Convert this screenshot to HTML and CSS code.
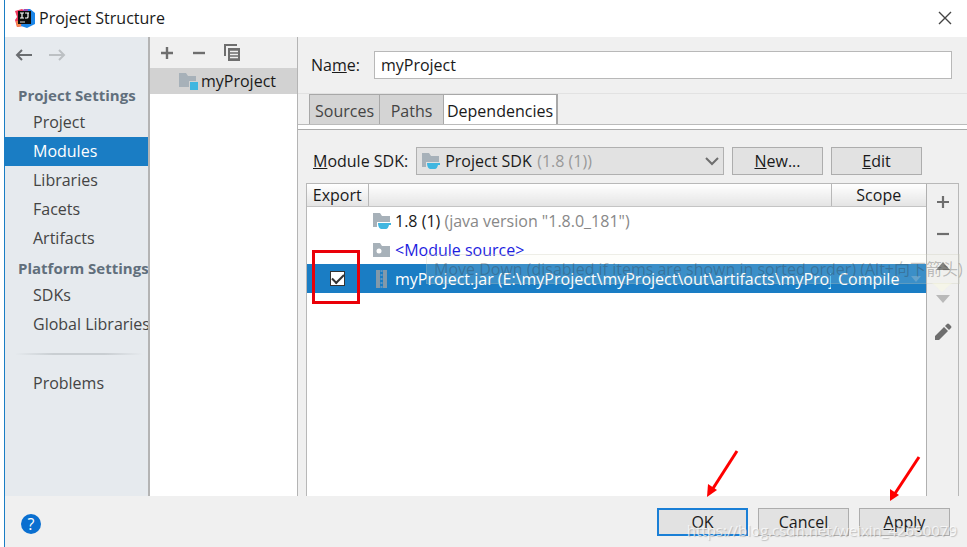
FILE: index.html
```
<!DOCTYPE html>
<html lang="en">
<head>
    <meta charset="UTF-8">
    <title>Project Structure</title>
    <link rel="stylesheet" href="styles.css">
</head>
<body>
    <div class="dialog">
        <header class="title-bar">
            <svg class="logo" width="20" height="20" viewBox="0 0 20 20">
                <path d="M0 3l7-2 5 3-4 14-6 1-2-7 2-3z" fill="#f0385f"/>
                <path d="M1 13l4 0 2 5-5 1z" fill="#f58a4b"/>
                <path d="M9 1l6 0 5 4 0 11-8 4-6-2z" fill="#1c86e8"/>
                <path d="M9 1l4 0 0 3-6 0z" fill="#a04bb5"/>
                <rect x="3" y="3" width="13" height="13" fill="#0b0b0b"/>
                <path d="M5 5h4M7 5v5M5 10h4M10 5h4M13 5v4q0 1-1 1h-2" fill="none" stroke="#fff" stroke-width="1.2"/>
                <path d="M5 14h5" stroke="#ddd" stroke-width="1"/>
            </svg>
            <h1>Project Structure</h1>
            <button class="icon-button close" aria-label="Close">
                <svg width="14" height="14" viewBox="0 0 14 14"><path d="M1 1l12 12M13 1L1 13" stroke="#444" stroke-width="1.4"/></svg>
            </button>
        </header>

        <div class="content">
            <nav class="sidebar">
                <div class="history">
                    <button class="icon-button" aria-label="Back">
                        <svg width="18" height="14" viewBox="0 0 18 14"><path d="M17 7H2M7 2L2 7l5 5" fill="none" stroke="#6a6d70" stroke-width="2"/></svg>
                    </button>
                    <button class="icon-button" aria-label="Forward" disabled>
                        <svg width="18" height="14" viewBox="0 0 18 14"><path d="M1 7h15M11 2l5 5-5 5" fill="none" stroke="#bcc0c3" stroke-width="2"/></svg>
                    </button>
                </div>
                <h2>Project Settings</h2>
                <a href="#project">Project</a>
                <a href="#modules" class="active">Modules</a>
                <a href="#libraries">Libraries</a>
                <a href="#facets">Facets</a>
                <a href="#artifacts">Artifacts</a>
                <h2>Platform Settings</h2>
                <a href="#sdks">SDKs</a>
                <a href="#global">Global Libraries</a>
                <div class="separator"></div>
                <a href="#problems">Problems</a>
            </nav>

            <section class="modules">
                <div class="modules-toolbar">
                    <button class="icon-button" aria-label="Add module">
                        <svg width="14" height="14" viewBox="0 0 14 14"><path d="M1 7h12M7 1v12" stroke="#6e6e6e" stroke-width="2.4"/></svg>
                    </button>
                    <button class="icon-button" aria-label="Remove module">
                        <svg width="14" height="14" viewBox="0 0 14 14"><path d="M1 7h12" stroke="#6e6e6e" stroke-width="2.4"/></svg>
                    </button>
                    <button class="icon-button" aria-label="Copy module">
                        <svg width="16" height="17" viewBox="0 0 16 17">
                            <path d="M1 12V1h12" fill="none" stroke="#6e6e6e" stroke-width="2"/>
                            <path d="M4 4h12v13H4z" fill="#6e6e6e"/>
                            <path d="M6 7.5h8M6 10.5h8M6 13.5h8" stroke="#f0f0f0" stroke-width="1.3"/>
                        </svg>
                    </button>
                </div>
                <div class="module-item">
                    <svg width="20" height="18" viewBox="0 0 20 18">
                        <path d="M1 1h7l2 3h8v11H1z" fill="#a7b1b9"/>
                        <path d="M11 9h9v9h-9z" fill="#d2d2d2"/>
                        <path d="M12 10h8v8h-8z" fill="#40b6e0"/>
                    </svg>
                    <span>myProject</span>
                </div>
            </section>

            <main class="details">
                <div class="name-row">
                    <label for="name">Na<u>m</u>e:</label>
                    <input type="text" id="name" value="myProject">
                </div>

                <div class="tabs" role="tablist">
                    <button class="tab tab-sources" role="tab">Sources</button>
                    <button class="tab tab-paths" role="tab">Paths</button>
                    <button class="tab tab-dependencies selected" role="tab" aria-selected="true">Dependencies</button>
                </div>

                <div class="sdk-row">
                    <label for="sdk"><u>M</u>odule SDK:</label>
                    <div class="sdk-select">
                        <select id="sdk">
                            <option>Project SDK</option>
                        </select>
                        <div class="sdk-face">
                            <svg width="20" height="18" viewBox="0 0 20 18">
                                <path d="M1 1h7l2 3h8v11H1z" fill="#a7b1b9"/>
                                <path d="M5 10h15v8H5z" fill="#e2e2e2"/>
                                <path d="M6 11h13v2h-2q-1 4-3 4H9q-3-1-3-6z" fill="#40b6e0"/>
                            </svg>
                            <span class="sdk-version">(1.8 (1))</span>
                            <svg class="chevron" width="14" height="9" viewBox="0 0 14 9"><path d="M1 1l6 6 6-6" fill="none" stroke="#6e6e6e" stroke-width="2"/></svg>
                        </div>
                    </div>
                    <button class="button"><u>N</u>ew...</button>
                    <button class="button"><u>E</u>dit</button>
                </div>

                <div class="dependencies">
                    <div class="table-area">
                        <table>
                            <colgroup>
                                <col class="col-export">
                                <col>
                                <col class="col-scope">
                            </colgroup>
                            <thead>
                                <tr>
                                    <th>Export</th>
                                    <th aria-label="Dependency"></th>
                                    <th>Scope</th>
                                </tr>
                            </thead>
                            <tbody>
                                <tr>
                                    <td></td>
                                    <td>
                                        <div class="entry">
                                            <svg width="20" height="18" viewBox="0 0 20 18">
                                                <path d="M1 1h7l2 3h8v11H1z" fill="#a7b1b9"/>
                                                <path d="M5 10h15v8H5z" fill="#fff"/>
                                                <path d="M6 11h13v2h-2q-1 4-3 4H9q-3-1-3-6z" fill="#40b6e0"/>
                                            </svg>
                                            <span>1.8 (1) <span class="muted">(java version "1.8.0_181")</span></span>
                                        </div>
                                    </td>
                                    <td></td>
                                </tr>
                                <tr>
                                    <td></td>
                                    <td>
                                        <div class="entry">
                                            <svg width="20" height="18" viewBox="0 0 20 18">
                                                <path d="M1 2h7l2 3h8v11H1z" fill="#a7b1b9"/>
                                                <circle cx="7" cy="10" r="2.5" fill="#fff"/>
                                            </svg>
                                            <span class="source">&lt;Module source&gt;</span>
                                        </div>
                                    </td>
                                    <td></td>
                                </tr>
                                <tr class="selected-row">
                                    <td class="export-cell">
                                        <input type="checkbox" aria-label="Export myProject.jar" checked>
                                        <div class="mark-box"></div>
                                    </td>
                                    <td>
                                        <div class="entry">
                                            <svg width="20" height="18" viewBox="0 0 20 18">
                                                <path d="M4 0h4v18H4zM11 0h4v18h-4z" fill="#8299aa"/>
                                                <path d="M9.500 0v18" stroke="#5f97c2" stroke-width="2" stroke-dasharray="2 2"/>
                                            </svg>
                                            <span>myProject.jar (E:\myProject\myProject\out\artifacts\myProje</span>
                                        </div>
                                    </td>
                                    <td>
                                        <div class="scope">
                                            Compile
                                            <svg width="10" height="6" viewBox="0 0 10 6"><path d="M0 0h10L5 6z" fill="#4a93c8"/></svg>
                                        </div>
                                    </td>
                                </tr>
                            </tbody>
                        </table>
                    </div>
                    <div class="side-toolbar">
                        <button class="icon-button" aria-label="Add">
                            <svg width="14" height="14" viewBox="0 0 14 14"><path d="M1 7h12M7 1v12" stroke="#6e6e6e" stroke-width="2.2"/></svg>
                        </button>
                        <button class="icon-button" aria-label="Remove">
                            <svg width="14" height="14" viewBox="0 0 14 14"><path d="M1 7h12" stroke="#6e6e6e" stroke-width="2.2"/></svg>
                        </button>
                        <button class="icon-button" aria-label="Move up">
                            <svg width="14" height="14" viewBox="0 0 14 14"><path d="M0 11h14L7 3z" fill="#6e6e6e"/></svg>
                        </button>
                        <button class="icon-button" aria-label="Move down" disabled>
                            <svg width="14" height="14" viewBox="0 0 14 14"><path d="M0 4h14l-7 8z" fill="#b9b9b9"/></svg>
                        </button>
                        <button class="icon-button" aria-label="Edit entry">
                            <svg width="18" height="18" viewBox="0 0 18 18"><path d="M1 17v-4l9-9 4 4-9 9zM11 3l2-2q1-1 2 0l2 2q1 1 0 2l-2 2z" fill="#6e6e6e"/></svg>
                        </button>
                    </div>
                    <div class="tooltip" role="tooltip">
                        Move Down (disabled if items are shown in sorted order) (Alt+向下箭头)
                        <svg class="tooltip-tip" width="20" height="9" viewBox="0 0 20 9"><path d="M0 0h20l-10 9z" fill="#fafae1" fill-opacity="0.5"/></svg>
                    </div>
                </div>
            </main>
        </div>

        <footer class="footer">
            <button class="help" aria-label="Help">?</button>
            <div class="action">
                <button class="button default">OK</button>
                <svg class="arrow arrow-ok" width="36" height="50" viewBox="0 0 36 50">
                    <path d="M33 2L8 41" stroke="#f00" stroke-width="3"/>
                    <path d="M3 48l1-13 9 6z" fill="#f00"/>
                </svg>
            </div>
            <div class="action">
                <button class="button">Cancel</button>
            </div>
            <div class="action">
                <button class="button"><u>A</u>pply</button>
                <svg class="arrow arrow-apply" width="36" height="50" viewBox="0 0 36 50">
                    <path d="M33 2L8 40" stroke="#f00" stroke-width="3"/>
                    <path d="M4 46l0-12 9 6z" fill="#f00"/>
                </svg>
            </div>
            <div class="watermark">https://blog.csdn.net/weixin_42650079</div>
        </footer>
    </div>
</body>
</html>
```

FILE: styles.css
```
* {
    box-sizing: border-box;
}
body {
    margin: 0;
    padding-left: 4px;
    background-color: #fff;
    color: #1a1a1a;
    font-family: "Open Sans", "Noto Sans CJK SC", sans-serif;
    font-size: 16px;
    line-height: 20px;
}
button, input, select {
    font: inherit;
    color: inherit;
}
svg {
    display: block;
    flex: none;
}
.dialog {
    display: flex;
    flex-direction: column;
    min-height: 100vh;
    border-left: 1px solid #1a7dc4;
}
.icon-button {
    display: flex;
    padding: 0;
    border: 0;
    background: none;
}

/* title bar */
.title-bar {
    display: flex;
    align-items: center;
    gap: 4px;
    height: 37px;
    padding: 0 15px 2px 10px;
}
.title-bar h1 {
    margin: 0;
    font-size: 16px;
    font-weight: normal;
}
.close {
    margin-left: auto;
}

.content {
    display: flex;
    flex: 1;
}

/* left navigation */
.sidebar {
    flex: none;
    width: 145px;
    overflow: hidden;
    white-space: nowrap;
    background-color: #e6eaee;
    border-right: 2px solid #b4b4b4;
}
.history {
    display: flex;
    gap: 15px;
    height: 43px;
    padding: 11px 10px 0;
}
.sidebar h2 {
    height: 28px;
    margin: 0;
    padding-left: 13px;
    color: #616f7c;
    font-size: 15px;
    line-height: 30px;
}
.sidebar a {
    display: block;
    padding-left: 28px;
    color: #444;
    line-height: 29px;
    text-decoration: none;
}
.sidebar a.active {
    background-color: #1a7dc4;
    color: #fff;
}
.separator {
    height: 2px;
    margin: 14px 5px 14px 10px;
    background: linear-gradient(to right, transparent, #c9ced2 30%, #c9ced2 70%, transparent);
}

/* module list */
.modules {
    flex: none;
    width: 148px;
    border-right: 1px solid #b4b4b4;
}
.modules-toolbar {
    display: flex;
    align-items: center;
    gap: 18px;
    height: 31px;
    padding-left: 10px;
    background-color: #f0f0f0;
}
.module-item {
    display: flex;
    align-items: center;
    gap: 3px;
    height: 26px;
    padding-left: 28px;
    background-color: #d2d2d2;
}

/* module details */
.details {
    display: flex;
    flex: 1;
    flex-direction: column;
    min-width: 0;
    background-color: #f0f0f0;
}
.name-row {
    display: flex;
    align-items: center;
    gap: 14px;
    padding: 14px 15px 14px 13px;
    border-bottom: 1px solid #e2e2e2;
}
.name-row input {
    flex: 1;
    height: 28px;
    padding: 0 6px;
    border: 1px solid #b8b8b8;
    background-color: #fff;
}
.tabs {
    display: flex;
    height: 36px;
    padding: 0 11px 5px;
    background: linear-gradient(to bottom, #f0f0f0 30px, #bbb 30px, #bbb 31px, #fff 31px);
    border-bottom: 1px solid #aaa;
}
.tab {
    padding: 2px 0 0;
    border: 1px solid #a8a8a8;
    border-width: 1px 0 0 1px;
    background-color: #d4d4d4;
    color: #444;
}
.tab-sources {
    width: 70px;
}
.tab-paths {
    width: 64px;
}
.tab-dependencies {
    width: 115px;
}
.tab.selected {
    border-right-width: 2px;
    background-color: #fff;
    color: #1a1a1a;
}

.sdk-row {
    display: flex;
    align-items: center;
    gap: 8px;
    padding: 17px 45px 8px 15px;
}
.sdk-select {
    position: relative;
    flex: 1;
}
.sdk-select select {
    display: block;
    width: 100%;
    height: 28px;
    padding: 0 28px;
    border: 1px solid #b0b0b0;
    border-radius: 0;
    background-color: #e2e2e2;
    appearance: none;
}
.sdk-face {
    position: absolute;
    inset: 0;
    display: flex;
    align-items: center;
    padding: 0 5px;
    pointer-events: none;
}
.sdk-version {
    margin-left: 96px;
    color: #999;
}
.chevron {
    margin-left: auto;
}
.button {
    width: 91px;
    height: 28px;
    padding: 0;
    border: 1px solid #adadad;
    background-color: #e2e2e2;
}
.button.default {
    border: 2px solid #1a7fd6;
}

/* dependency table */
.dependencies {
    position: relative;
    display: flex;
    flex: 1;
    margin: 0 8px;
    border: 1px solid #b8b8b8;
    border-bottom: 0;
}
.table-area {
    flex: 1;
    min-width: 0;
    background-color: #fff;
    border-right: 1px solid #b0b0b0;
}
table {
    width: 100%;
    border-collapse: collapse;
    table-layout: fixed;
}
.col-export {
    width: 61px;
}
.col-scope {
    width: 95px;
}
th {
    height: 22px;
    padding: 0;
    border-right: 1px solid #b8b8b8;
    border-bottom: 1px solid #c4c4c4;
    background: linear-gradient(to bottom, #fff, #e4e4e4);
    font-weight: normal;
}
th:last-child {
    border-right: 0;
}
td {
    height: 29px;
    padding: 0;
}
.entry {
    display: flex;
    align-items: center;
    gap: 3px;
    padding-left: 4px;
    overflow: hidden;
    white-space: nowrap;
}
.muted {
    color: #888;
}
.source {
    color: #1c1ce0;
}
.selected-row {
    background-color: #1a7dc4;
    color: #fff;
}
.export-cell {
    position: relative;
}
.export-cell input {
    display: block;
    width: 15px;
    height: 15px;
    margin: 0 auto;
    appearance: none;
    border: 1px solid #333;
    background-color: #fff;
}
.export-cell input:checked::before {
    content: "";
    display: block;
    width: 10px;
    height: 5px;
    margin: 2px 1px;
    border: solid #333;
    border-width: 0 0 2px 2px;
    transform: rotate(-45deg);
}
.mark-box {
    position: absolute;
    top: -14px;
    left: 5px;
    width: 48px;
    height: 54px;
    border: 3px solid #ea0008;
}
.scope {
    display: flex;
    align-items: center;
    justify-content: space-between;
    padding: 0 5px 0 7px;
}
.side-toolbar {
    display: flex;
    flex: none;
    flex-direction: column;
    align-items: center;
    gap: 18px;
    width: 31px;
    padding-top: 11px;
}
.tooltip {
    position: absolute;
    top: 70px;
    right: -2px;
    left: 119px;
    height: 30px;
    padding: 4px 0 4px 7px;
    background-color: rgba(250, 250, 225, 0.15);
    border: 1px solid rgba(190, 190, 170, 0.25);
    color: rgba(50, 50, 50, 0.3);
    white-space: nowrap;
    pointer-events: none;
}
.tooltip-tip {
    position: absolute;
    top: 100%;
    right: 7px;
}

/* bottom buttons */
.footer {
    position: relative;
    display: flex;
    align-items: center;
    gap: 10px;
    height: 51px;
    padding: 1px 17px 0 16px;
    background-color: #f0f0f0;
}
.help {
    width: 20px;
    height: 20px;
    margin: 4px auto 0 0;
    padding: 0;
    border: 0;
    border-radius: 50%;
    background-color: #0a6fd0;
    color: #fff;
}
.action {
    position: relative;
}
.arrow {
    position: absolute;
    pointer-events: none;
}
.arrow-ok {
    right: 8px;
    bottom: 37px;
}
.arrow-apply {
    right: 28px;
    bottom: 31px;
}
.watermark {
    position: absolute;
    right: 10px;
    bottom: 7px;
    color: rgba(255, 255, 255, 0.7);
    font-size: 15px;
    text-shadow: 1px 1px 1px rgba(120, 120, 120, 0.4);
    pointer-events: none;
}
```
